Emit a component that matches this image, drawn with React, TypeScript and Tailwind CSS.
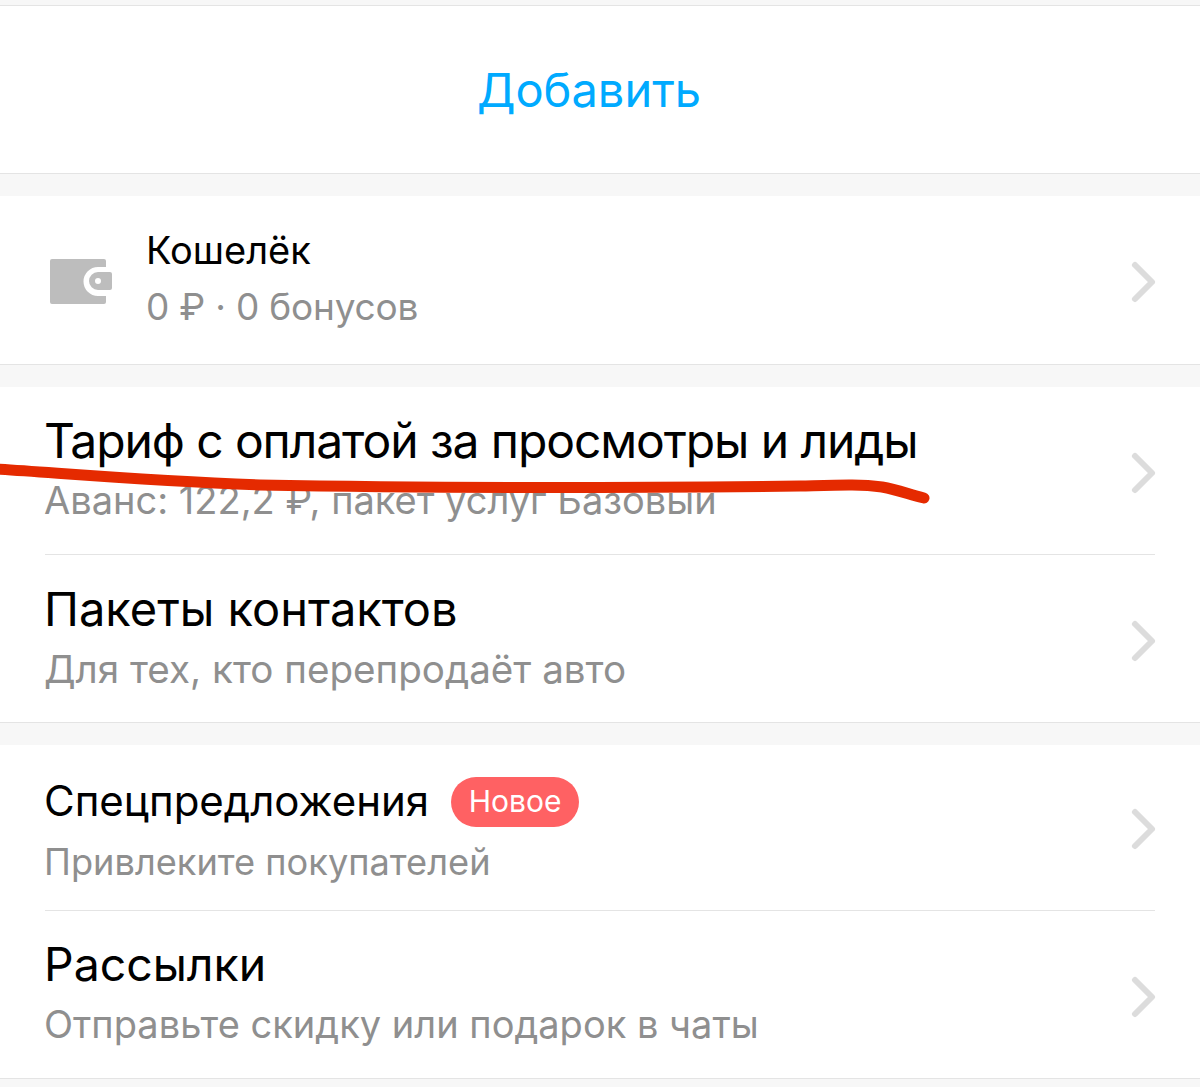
const font = "font-['Inter','Liberation_Sans',sans-serif]"

function Chevron({ className }: { className: string }) {
  return (
    <svg width="30" height="48" viewBox="0 0 30 48" fill="none" className={`shrink-0 -mr-[4px] ${className}`}>
      <path d="M6 7 L23 24 L6 41" stroke="#dcdcdc" strokeWidth="6" strokeLinecap="round" strokeLinejoin="round" />
    </svg>
  )
}

function Row({ title, sub, titleClass, subClass, rowClass, chevronClass, badge }: { title: string; sub: string; titleClass: string; subClass: string; rowClass: string; chevronClass: string; badge?: boolean }) {
  return (
    <div className={`flex items-center justify-between ${rowClass}`}>
      <div className="-ml-[1px]">
        <div className="flex items-center">
          <span className={`leading-[56px] text-black ${titleClass}`}>{title}</span>
          {badge && (
            <span className="ml-[22px] mt-[2px] h-[50px] w-[128px] rounded-[25px] bg-[#ff6163] text-white text-[30px] flex items-center justify-center">
              Новое
            </span>
          )}
        </div>
        <div className={`leading-[52px] text-[#8f8f8f] ${subClass}`}>{sub}</div>
      </div>
      <Chevron className={chevronClass} />
    </div>
  )
}

export default function App() {
  return (
    <div className={`w-[1200px] h-[1087px] overflow-hidden bg-[#f7f7f7] relative ${font}`}>
      <div className="mt-[5px] h-[169px] bg-white border-y border-[#e4e4e4] flex items-center justify-center pr-[22px] pt-[2px]">
        <span className="text-[47px] text-[#00aaff]">Добавить</span>
      </div>
      <div className="mt-[22px] h-[169px] bg-white border-b border-[#e4e4e4] flex items-center justify-between pl-[50px] pr-[45px] pb-[2px]">
        <div className="flex items-center">
          <svg width="62" height="45" viewBox="0 0 62 45" className="mr-[34px] translate-y-[2px]">
            <path fill="#bdbdbd" d="M2 0h52a2 2 0 0 1 2 2v6h-8a14.500 14.500 0 0 0 0 29h8v6a2 2 0 0 1-2 2H2a2 2 0 0 1-2-2V2a2 2 0 0 1 2-2z" />
            <path fill="#bdbdbd" fillRule="evenodd" d="M48 13h12a2 2 0 0 1 2 2v14a2 2 0 0 1-2 2H48a9 9 0 0 1 0-18zm0 6a3 3 0 1 0 0 6 3 3 0 0 0 0-6z" />
          </svg>
          <div>
            <div className="text-[38px] leading-[50px] text-black">Кошелёк</div>
            <div className="text-[37px] leading-[52px] text-[#8f8f8f] mt-[6px] tracking-[-0.2px]">0 ₽ · 0 бонусов</div>
          </div>
        </div>
        <Chevron className="translate-y-[3px]" />
      </div>
      <div className="mt-[22px] bg-white border-b border-[#e4e4e4] px-[45px]">
        <div className="border-b border-[#e4e4e4]">
          <Row
            title="Тариф с оплатой за просмотры и лиды"
            sub="Аванс: 122,2 ₽, пакет услуг Базовый"
            titleClass="text-[48px] tracking-[-1.1px]"
            subClass="text-[38px] mt-[5px]"
            rowClass="h-[167px] pb-[2px]"
            chevronClass="translate-y-[3px]"
          />
        </div>
        <Row
          title="Пакеты контактов"
          sub="Для тех, кто перепродаёт авто"
          titleClass="text-[47px]"
          subClass="text-[38.6px] mt-[6px]"
          rowClass="h-[167px] pb-[2px]"
          chevronClass="translate-y-[3px]"
        />
      </div>
      <div className="mt-[22px] bg-white border-b border-[#e4e4e4] px-[45px]">
        <div className="border-b border-[#e4e4e4]">
          <Row
            title="Спецпредложения"
            sub="Привлеките покупателей"
            titleClass="text-[42px]"
            subClass="text-[36.2px] mt-[7px]"
            rowClass="h-[165px] pt-[5px]"
            chevronClass="-translate-y-[1px]"
            badge
          />
        </div>
        <Row
          title="Рассылки"
          sub="Отправьте скидку или подарок в чаты"
          titleClass="text-[46.4px]"
          subClass="text-[38px] mt-[6px]"
          rowClass="h-[167px] pb-[4px]"
          chevronClass="translate-y-[4px]"
        />
      </div>
      {/* red marker stroke over the tariff row */}
      <svg className="absolute left-0 top-[455px]" width="940" height="60" viewBox="0 0 940 60" fill="none">
        <path d="M-5 14 C 60 18 150 26 260 30 C 420 33 620 33 800 31 C 840 30 860 29 882 32 C 898 35 908 39 924 43" stroke="#e52a00" strokeWidth="11" strokeLinecap="round" strokeLinejoin="round" />
      </svg>
    </div>
  )
}
